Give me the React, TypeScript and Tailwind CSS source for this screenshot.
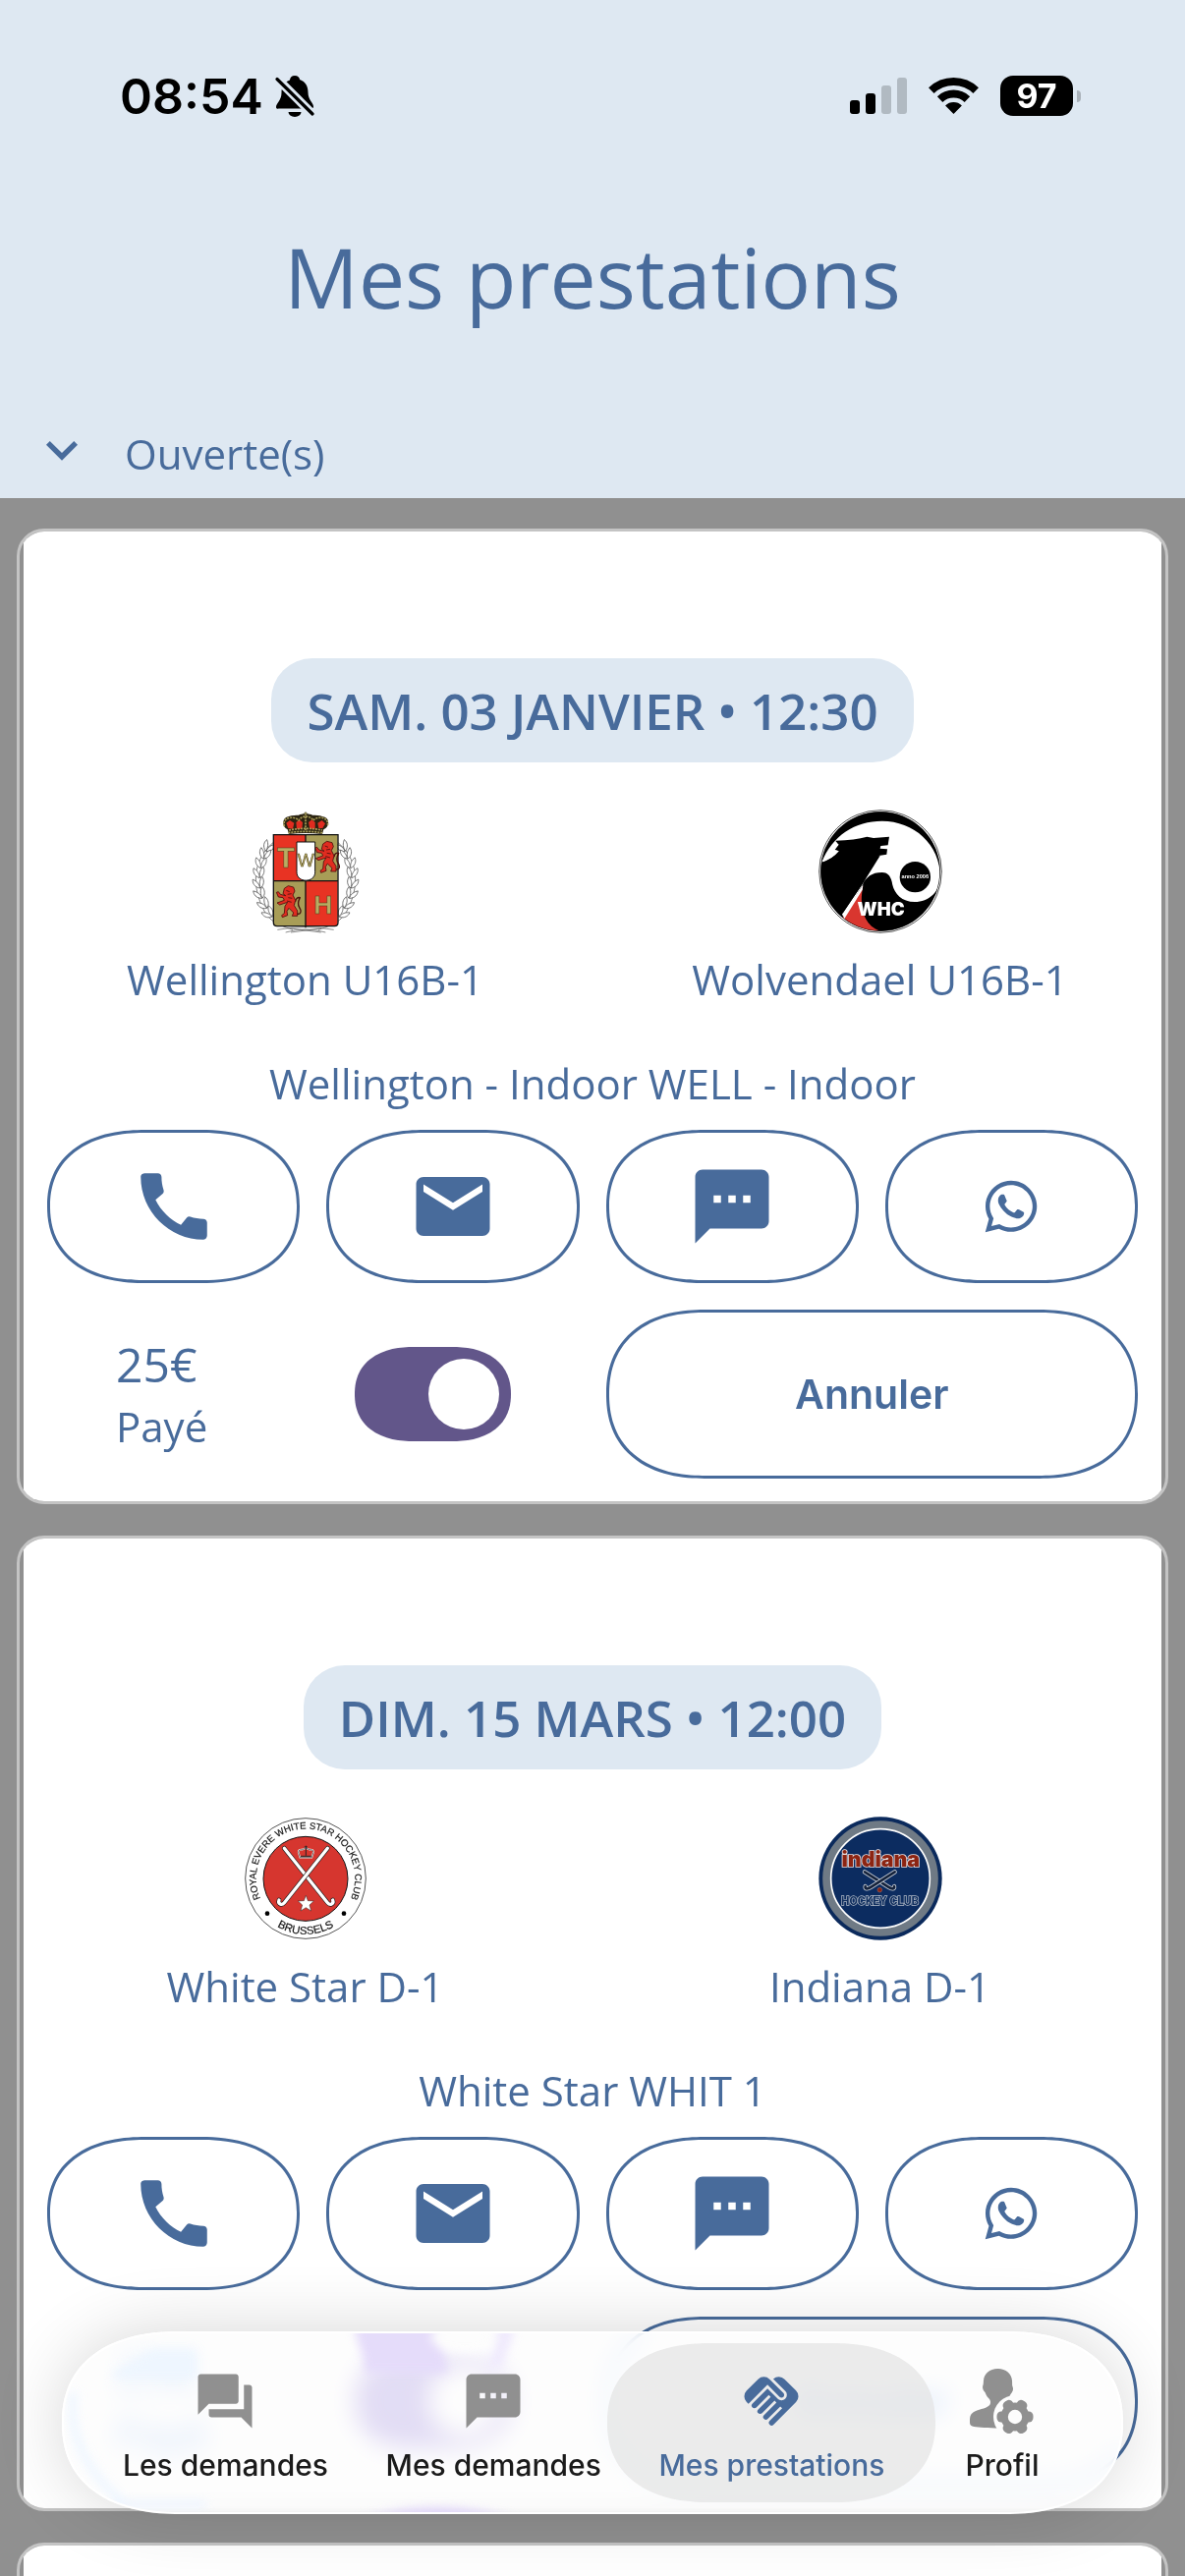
import {ReactNode, useState} from 'react'
import {MdCall, MdEmail, MdExpandMore, MdForum, MdHandshake, MdSms} from 'react-icons/md'
import {FaWhatsapp} from 'react-icons/fa'
import clsx from 'clsx'

type Team = {
  name: string
  logo: ReactNode
}

type Prestation = {
  id: string
  date: string
  home: Team
  away: Team
  location: string
  amount: string
  paid: boolean
}

const prestations: Prestation[] = [
  {
    id: 'p1',
    date: 'SAM. 03 JANVIER • 12:30',
    home: {name: 'Wellington U16B-1', logo: <WellingtonLogo/>},
    away: {name: 'Wolvendael U16B-1', logo: <WolvendaelLogo/>},
    location: 'Wellington - Indoor WELL - Indoor',
    amount: '25€',
    paid: true,
  },
  {
    id: 'p2',
    date: 'DIM. 15 MARS • 12:00',
    home: {name: 'White Star D-1', logo: <WhiteStarLogo/>},
    away: {name: 'Indiana D-1', logo: <IndianaLogo/>},
    location: 'White Star WHIT 1',
    amount: '25€',
    paid: true,
  },
]

export default function App() {
  return (
    <div className="flex h-screen flex-col bg-[#909090] font-['Open_Sans',sans-serif] text-[#486b9b]">
      <Header/>
      <main className="flex min-h-0 flex-1 flex-col gap-8 overflow-y-auto px-[17px] pt-[31px] [scrollbar-width:none]">
        {prestations.map((prestation) => (
          <PrestationCard key={prestation.id} prestation={prestation}/>
        ))}
        <CardShell>
          <div className="h-64"/>
        </CardShell>
      </main>
      <TabBar/>
    </div>
  )
}

function Header() {
  return (
    <header className="bg-[#dee8f2] pb-[17px]">
      <StatusBar/>
      <h1 className="pt-[30px] text-center text-[84px] leading-[114px]">Mes prestations</h1>
      <button type="button" className="mt-[94px] flex items-center gap-8 px-[31px] text-[42px] leading-[57px]">
        <MdExpandMore className="-mt-2 size-16" aria-hidden="true"/>
        Ouverte(s)
      </button>
    </header>
  )
}

function StatusBar() {
  return (
    <div className="flex h-[195px] items-center justify-between pl-[122px] pr-[106px] font-['Inter',sans-serif] text-black">
      <div className="flex items-center gap-3">
        <span className="text-[50px] leading-[62px] font-semibold">08:54</span>
        <BellOffIcon/>
      </div>
      <div className="flex items-center gap-[22px]">
        <svg className="h-[37px] w-[58px]" viewBox="0 0 58 37" aria-hidden="true">
          <rect x="0" y="23" width="10" height="14" rx="3"/>
          <rect x="16" y="16" width="10" height="21" rx="3"/>
          <rect x="32" y="8" width="10" height="29" rx="3" fill="#b1bac2"/>
          <rect x="48" y="0" width="10" height="37" rx="3" fill="#b1bac2"/>
        </svg>
        <svg className="h-[37px] w-[51px]" viewBox="0 0 51 37" fill="none" stroke="#000" strokeWidth="8" aria-hidden="true">
          <path d="M2.8 13.2a32.8 32.8 0 0 1 45.4 0"/>
          <path d="M11.6 22.1a20.3 20.3 0 0 1 27.8 0"/>
          <path d="M25.5 37l-8.4-8.6a12 12 0 0 1 16.8 0z" fill="#000" stroke="none"/>
        </svg>
        <div className="flex items-center gap-1">
          <span className="flex h-[41px] w-[74px] items-center justify-center rounded-[13px] bg-black text-[34px] leading-none font-bold text-white">97</span>
          <span className="h-3 w-1 rounded-r-full bg-[#a9b1b9]"/>
        </div>
      </div>
    </div>
  )
}

function CardShell({children}: { children: ReactNode }) {
  return (
    <section className="shrink-0 overflow-hidden rounded-[28px] border-3 border-[#c4c4c4] px-1">
      <div className="bg-white">{children}</div>
    </section>
  )
}

function PrestationCard({prestation}: { prestation: Prestation }) {
  const [paid, setPaid] = useState(prestation.paid)
  const switchId = `${prestation.id}-paid`

  return (
    <CardShell>
      <div className="flex flex-col items-center px-6 pt-[129px] pb-[23px]">
        <h2 className="rounded-[42px] bg-[#dee8f2] px-9 py-[18px] text-[51px] leading-[70px] font-semibold">
          {prestation.date}
        </h2>
        <div className="-mx-[30px] mt-12 grid grid-cols-2 self-stretch">
          <TeamCell team={prestation.home}/>
          <TeamCell team={prestation.away}/>
        </div>
        <p className="mt-[49px] text-[42px] leading-[57px]">{prestation.location}</p>
        <div className="mt-[19px] grid w-full grid-cols-4 gap-[27px]">
          <OutlineButton label="Appeler" className="h-[156px]"><MdCall className="size-[90px]"/></OutlineButton>
          <OutlineButton label="E-mail" className="h-[156px]"><MdEmail className="size-[90px]"/></OutlineButton>
          <OutlineButton label="SMS" className="h-[156px]"><MdSms className="size-[90px]"/></OutlineButton>
          <OutlineButton label="WhatsApp" className="h-[156px]"><FaWhatsapp className="size-[60px]"/></OutlineButton>

          <div className="col-span-2 flex items-center justify-between px-[70px]">
            <div>
              <p className="text-5xl leading-[66px]">{prestation.amount}</p>
              <label htmlFor={switchId} className="block text-[42px] leading-[60px]">Payé</label>
            </div>
            <input
              id={switchId}
              type="checkbox"
              role="switch"
              checked={paid}
              onChange={(e) => setPaid(e.target.checked)}
              className="flex h-24 w-[159px] appearance-none items-center rounded-[60px/48px] bg-gray-300 px-3 [corner-shape:superellipse(1.2)] before:size-[72px] before:rounded-full before:bg-white checked:justify-end checked:bg-[#62568a]"
            />
          </div>
          <OutlineButton className="col-span-2 h-[172px]">
            <span className="font-['Inter',sans-serif] text-[41px] leading-[52px] font-semibold">Annuler</span>
          </OutlineButton>
        </div>
      </div>
    </CardShell>
  )
}

function TeamCell({team}: { team: Team }) {
  return (
    <div className="flex flex-col items-center gap-[18px]">
      {team.logo}
      <p className="text-[42px] leading-[57px]">{team.name}</p>
    </div>
  )
}

function OutlineButton({label, className, children}: {
  label?: string
  className?: string
  children: ReactNode
}) {
  return (
    <button
      type="button"
      aria-label={label}
      className={clsx(
        'flex items-center justify-center rounded-[100px/50%] border-3 border-[#486b9b] [corner-shape:superellipse(1.2)]',
        className
      )}
    >
      {children}
    </button>
  )
}

const tabs = [
  {label: 'Les demandes', icon: <MdForum className="size-[66px]"/>},
  {label: 'Mes demandes', icon: <MdSms className="size-[66px]"/>},
  {label: 'Mes prestations', icon: <MdHandshake className="size-[66px]"/>, active: true},
  {label: 'Profil', icon: <ProfileIcon/>},
]

function TabBar() {
  return (
    <nav className="fixed inset-x-[63px] bottom-[63px] flex justify-between overflow-hidden rounded-[120px/50%] border-2 border-white bg-[#fdfdfd]/82 px-[60px] py-2.5 font-['Inter',sans-serif] text-[30px] leading-9 font-medium text-[#1b1b1b] shadow-[0_0_70px_rgba(0,0,0,0.16)] backdrop-blur-[12px] backdrop-saturate-[2.5] [corner-shape:superellipse(1.2)]">
      <GlassReflection/>
      {tabs.map((tab) => (
        <a
          key={tab.label}
          href="#"
          aria-current={tab.active ? 'page' : undefined}
          className={clsx(
            'relative flex h-[162px] min-w-[122px] flex-col items-center gap-3.5 pt-[26px]',
            tab.active ? '-mx-[52px] rounded-[105px/50%] bg-[#e2e2e2]/70 px-[52px] text-[#486b9b] [corner-shape:superellipse(1.2)]' : ''
          )}
        >
          <span className={tab.active ? '' : 'text-[#909090]'}>{tab.icon}</span>
          {tab.label}
        </a>
      ))}
    </nav>
  )
}

// Light bent along the edges of the glass bar
function GlassReflection() {
  return (
    <svg className="absolute top-0 left-0 h-full w-[560px]" viewBox="0 0 560 182" aria-hidden="true">
      <defs>
        <filter id="soft" x="-20%" y="-50%" width="140%" height="200%">
          <feGaussianBlur stdDeviation="5"/>
        </filter>
      </defs>
      <g filter="url(#soft)">
        <path d="M296-10h90c-10 14 4 30 4 50h-84c2-18-10-30-10-50z" fill="#e5dcfa"/>
        <path d="M440-10h18c0 20-8 26-12 44h-16q14-20 10-44z" fill="#efe9fd"/>
        <ellipse cx="408" cy="4" rx="34" ry="16" fill="#fdfdfd"/>
        <path d="M300 190q80-26 160 0z" fill="#e0d5f8"/>
        <path d="M50 40l40-24h45v30H50z" fill="#eef6ff"/>
        <path d="M10 60q-10 60 50 112" fill="none" stroke="#eef6ff" strokeWidth="8"/>
        <path d="M50 174h95" fill="none" stroke="#eaf3ff" strokeWidth="6"/>
      </g>
    </svg>
  )
}

function BellOffIcon() {
  return (
    <svg className="h-[42px] w-10" viewBox="0 0 40 42" aria-hidden="true">
      <mask id="bell-cut">
        <rect width="40" height="42" fill="#fff"/>
        <path d="M-2-1l44 44" stroke="#000" strokeWidth="9"/>
      </mask>
      <g mask="url(#bell-cut)">
        <path d="M20 0c3 0 5 2 5 4 6 2 8.500 7 8.500 13 0 8 5.500 10.500 5.500 14.500 0 1.500-1 2-2.500 2h-33C2 34 1 33.500 1 32c0-4 5.500-6.500 5.500-14.500 0-6 2.500-11 8.500-13C15 2 17 0 20 0z"/>
      </g>
      <path d="M13.500 37h13a6.500 5 0 0 1-13 0z"/>
      <path d="M2 3.500l36 35.500" stroke="#000" strokeWidth="3.200" strokeLinecap="round"/>
    </svg>
  )
}

function ProfileIcon() {
  return (
    <svg className="size-[66px]" viewBox="0 0 66 66" fill="currentColor" aria-hidden="true">
      <mask id="profile-cut">
        <rect width="66" height="66" fill="#fff"/>
        <circle cx="46" cy="49" r="22" fill="#000"/>
      </mask>
      <mask id="gear-hole">
        <rect width="66" height="66" fill="#fff"/>
        <circle cx="46" cy="49" r="7.200" fill="#000"/>
      </mask>
      <path
        mask="url(#profile-cut)"
        d="M28.500 0C37 0 42.500 5 43 12c.3 3-.2 5 .8 7 .8 2-.3 5-2.300 7-2 4-4 6-5 8-.8 2 0 4 3 5v21C22 61 8 60 2.500 58.500 0 57.500 0 56 0 53c0-5 1-7.500 5-9.500 6-3 13-3 15.500-7 1-2 .5-4-.5-5.500-2-2-3.500-4-4.500-7-1.500-1.500-3-4-2.300-6.500.8-2 .5-3 .8-5.500C14.500 5 20 0 28.500 0z"
      />
      <g mask="url(#gear-hole)">
        <circle cx="46" cy="49" r="14.500"/>
        {[0, 60, 120].map((angle) => (
          <rect key={angle} x="27.500" y="43.500" width="37" height="11" rx="4.500" transform={`rotate(${angle} 46 49)`}/>
        ))}
      </g>
    </svg>
  )
}

function LionMark({transform}: { transform?: string }) {
  return (
    <g transform={transform} stroke="#4a0f0c" strokeWidth="2.500" fill="#e02c20" strokeLinejoin="round">
      <path d="M212 388c14 6 18-6 10-18s-2-22 2-30c-8-2-14 4-14 12" fill="none" strokeWidth="4"/>
      <path d="M176 312l12-8 16 4 4 12-6 12 8 16-4 16 10 16v16h-16l4-10-14-14-6 10 2 12-16 6-2-6 8-6 2-22 8-12-24 8-8-6 22-8-4-8-14-2-6-14 6-2 6 8 16 4-8-6z"/>
      <path d="M182 318l10 4M186 330l12-2M184 350l14 4M188 340l12 2" fill="none"/>
    </g>
  )
}

function WellingtonLogo() {
  return (
    <svg className="size-[126px]" viewBox="52 71 378 378" role="img" aria-label="Wellington">
      {/* laurels */}
      {[1, -1].map((side) => (
        <g key={side} transform={side === -1 ? 'translate(482 0) scale(-1 1)' : undefined} fill="#fff" stroke="#444" strokeWidth="2">
          <path d="M142 172C96 210 76 270 98 340s50 80 104 98" fill="none"/>
          {[
            [128, 182, 30], [116, 204, 14], [104, 232, 2], [98, 262, -8], [97, 294, -16],
            [100, 326, -26], [112, 358, -36], [126, 386, -44],
          ].map(([x, y, angle]) => (
            <g key={y} transform={`translate(${x} ${y}) rotate(${angle})`}>
              <path d="M0 18C-16 10-18-4-14-14-4-6 2 4 0 18z"/>
              <path d="M2 18C0 4 6-8 16-14 20 0 14 12 2 18z"/>
            </g>
          ))}
        </g>
      ))}
      <path d="M155 438q86-16 172 0M180 446q60-18 122 0M196 434l92 12M288 434l-92 12" fill="none" stroke="#555" strokeWidth="2"/>
      {/* crown */}
      <path d="M190 146l-4-14c-18-8-18-38 4-40 10-4 22-4 30-4 8-6 34-6 42 0 10 0 22 0 30 4 24 2 24 32 4 40l-4 14q-52-6-102 0z" fill="#2b2412"/>
      <g fill="#e02c20">
        <path d="M182 112l11-8 13 8-4 18-14-2zM212 110l10-8 10 8-2 20h-16zM250 110l10-8 10 8 0 20h-16zM278 112l13-8 10 10-8 14h-12z"/>
      </g>
      <path d="M176 122c-8-30 32-32 44-18 10-16 34-16 44 0 14-14 50-12 44 18M241 84v50M190 134q51-10 102 0M188 142q52-8 106 0" fill="none" stroke="#a89d57" strokeWidth="5" strokeDasharray="6 3"/>
      <circle cx="241" cy="83" r="4" fill="#a89d57" stroke="#222"/>
      {/* shield */}
      <path d="M143 148h98v141h-98z" fill="#e83323"/>
      <path d="M241 148h98v141h-98z" fill="#a89d57"/>
      <path d="M143 289h98v138h-88q-10 0-10-10z" fill="#a89d57"/>
      <path d="M241 289h98v128q0 10-10 10h-88z" fill="#e83323"/>
      <path d="M143 148h197v268q0 11-11 11H154q-11 0-11-11zM241 148v284M143 289h197" fill="none" stroke="#111" strokeWidth="4"/>
      <LionMark/>
      <LionMark transform="translate(118 -136)"/>
      <path d="M214 170h56v92c0 34-56 34-56 0z" fill="#fff" stroke="#111" strokeWidth="3"/>
      <g fontFamily="Liberation Sans" textAnchor="middle" fill="#b9ac62" stroke="#4a4020" strokeWidth="1.500">
        <text x="181" y="249" fontSize="88" fontWeight="bold">T</text>
        <text x="295" y="388" fontSize="80" fontWeight="bold">H</text>
        <text x="242" y="244" fontSize="54">W</text>
      </g>
    </svg>
  )
}

function WolvendaelLogo() {
  return (
    <svg className="size-[126px]" viewBox="68 71 378 378" role="img" aria-label="Wolvendael">
      <defs>
        <clipPath id="whc-disc"><circle cx="257" cy="260" r="181"/></clipPath>
      </defs>
      <circle cx="257" cy="260" r="187" fill="#fff" stroke="#333" strokeWidth="2.500"/>
      <circle cx="257" cy="260" r="182" fill="#000" stroke="#000" strokeWidth="2"/>
      <g clipPath="url(#whc-disc)">
        <path d="M78 232C110 150 180 106 262 106c96 0 178 70 178 172 0 44-36 75-78 75-40 0-62-26-68-52-4-24-12-38-32-38-32 0-48 14-60 38L144 400l-4-10 60-88 56-90z" fill="#fff"/>
        <path d="M78 232q32-10 52-34l-12-4 10-14-8-14q60-2 96-12l20 4 48-4-4 26-22 2-2 8 22 2-2 16-24 4C240 230 216 270 198 304l-56 84-80-40z" fill="#000"/>
        <path d="M78 230q30-6 52-32l-14-4 14-16-8-8z" fill="#fff"/>
        <path d="M204 304c-12 60-2 118 52 138L140 446v-42z" fill="#d9362f"/>
        <path d="M204 300l-60 92 2 14 56-90z" fill="#fff"/>
      </g>
      <circle cx="363" cy="277" r="47" fill="#000"/>
      <text x="363" y="282" fontSize="17" textAnchor="middle" fontFamily="Liberation Sans" fontWeight="bold" fill="#fff">anno 2006</text>
      <text x="259" y="395" fontSize="56" textAnchor="middle" fontFamily="Inter, Liberation Sans" fontWeight="900" fill="#fff">WHC</text>
    </svg>
  )
}

function WhiteStarLogo() {
  return (
    <svg className="size-[126px]" viewBox="52 57 378 378" role="img" aria-label="White Star">
      <defs>
        <path id="star-top" d="M107.500 316A151 151 0 1 1 374.500 316"/>
        <path id="star-bottom" d="M121 367A170 170 0 0 0 361 367"/>
      </defs>
      <circle cx="241" cy="246" r="184" fill="#fff" stroke="#333" strokeWidth="2.500"/>
      <circle cx="241" cy="247" r="129" fill="#d6362f" stroke="#111" strokeWidth="3"/>
      <g fontFamily="Liberation Sans" fill="#111" stroke="#111" strokeWidth="0.500" textAnchor="middle">
        <text fontSize="29"><textPath href="#star-top" startOffset="50%">ROYAL EVERE WHITE STAR HOCKEY CLUB</textPath></text>
        <text fontSize="34"><textPath href="#star-bottom" startOffset="50%">BRUSSELS</textPath></text>
      </g>
      <circle cx="124" cy="353" r="7"/>
      <circle cx="358" cy="353" r="7"/>
      {[1, -1].map((side) => (
        <g key={side} transform={side === -1 ? 'translate(484 0) scale(-1 1)' : undefined} fill="none" strokeLinecap="round">
          <path d="M176 154l132 166c8 10 20 4 16-8" stroke="#222" strokeWidth="14"/>
          <path d="M176 154l132 166c8 10 20 4 16-8" stroke="#fff" strokeWidth="10"/>
        </g>
      ))}
      <path d="M242 298l6 16 18 1-13 12 5 18-16-10-16 10 5-18-13-12 18-1z" fill="#fff" stroke="#222" strokeWidth="1.500"/>
      <path d="M224 182l-5-16q0-10 12-8l11-5 11 5q12-2 12 8l-5 16z" fill="#d6362f" stroke="#fff" strokeWidth="5"/>
      <path d="M224 182l-5-16q0-10 12-8l11-5 11 5q12-2 12 8l-5 16z" fill="none" stroke="#222" strokeWidth="2"/>
      <path d="M242 146v30M237 150h10M226 178h32" stroke="#222" strokeWidth="3"/>
    </svg>
  )
}

function IndianaLogo() {
  return (
    <svg className="size-[126px]" viewBox="67 57 378 378" role="img" aria-label="Indiana">
      <circle cx="256" cy="246" r="188" fill="#0b2a5c"/>
      <circle cx="256" cy="246" r="164" fill="none" stroke="#6f7a85" strokeWidth="25"/>
      <circle cx="256" cy="246" r="151" fill="#0c2c60" stroke="#fff" strokeWidth="5"/>
      <text x="257" y="210" fontSize="64" textAnchor="middle" fontFamily="Inter, Liberation Sans" fontWeight="900" fill="#8c2412" stroke="#e9dfe0" strokeWidth="5" paintOrder="stroke">indiana</text>
      {[1, -1].map((side) => (
        <g key={side} transform={side === -1 ? 'translate(508 0) scale(-1 1)' : undefined} fill="none" strokeLinecap="round">
          <path d="M208 226l72 46c12 8 20 6 18-2" stroke="#c9ced6" strokeWidth="13"/>
          <path d="M208 226l72 46c12 8 20 6 18-2" stroke="#15233c" strokeWidth="8"/>
        </g>
      ))}
      <circle cx="254" cy="281" r="7" fill="#8c2412" stroke="#c98"/>
      <text x="255" y="328" fontSize="36" textAnchor="middle" fontFamily="Roboto, Liberation Sans" fontWeight="bold" fill="#12305f" stroke="#b4bcc8" strokeWidth="4" paintOrder="stroke">HOCKEY CLUB</text>
    </svg>
  )
}
